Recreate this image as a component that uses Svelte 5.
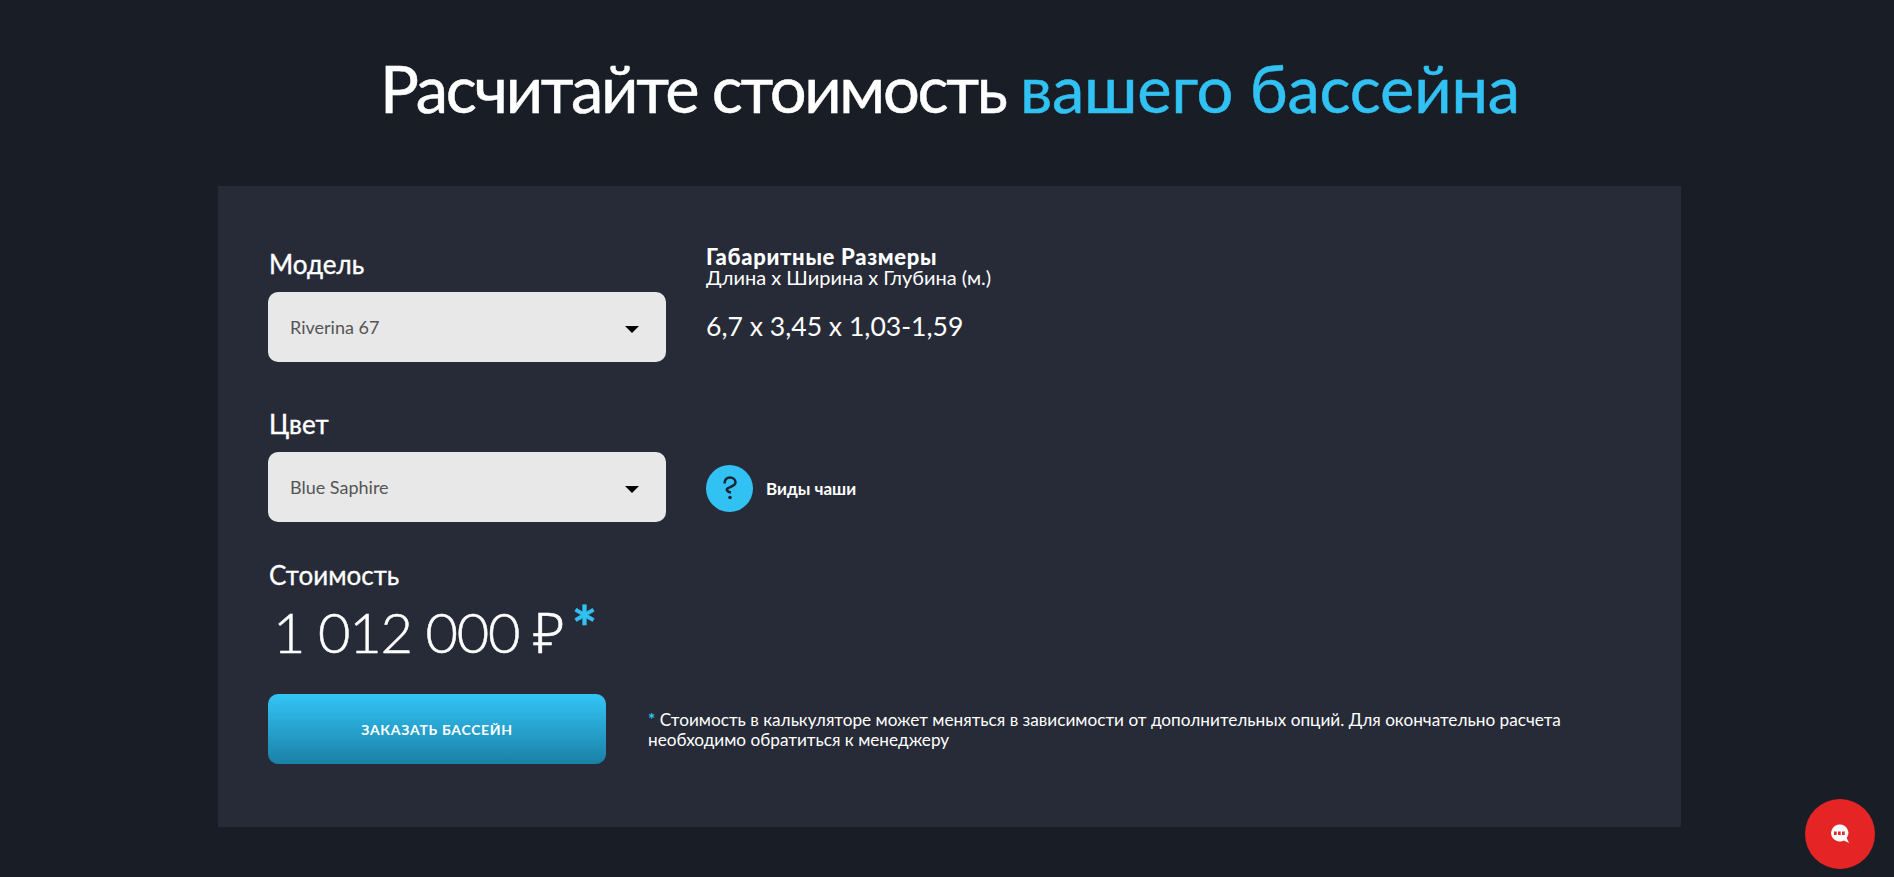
<script lang="ts">
	const price = '1 012 000 ₽';
</script>

<main class="page">
	<h1>Расчитайте стоимость <span>вашего бассейна</span></h1>

	<section class="panel">
		<div class="row first">
			<div class="field">
				<div class="label">Модель</div>
				<div class="select">
					<span>Riverina 67</span>
					<i class="caret"></i>
				</div>
			</div>
			<div class="dims">
				<div class="dims-title">Габаритные Размеры</div>
				<div class="dims-sub">Длина х Ширина х Глубина (м.)</div>
				<div class="dims-value">6,7 х 3,45 х 1,03-1,59</div>
			</div>
		</div>

		<div class="row second">
			<div class="field">
				<div class="label">Цвет</div>
				<div class="select">
					<span>Blue Saphire</span>
					<i class="caret"></i>
				</div>
			</div>
			<div class="hint">
				<span class="hint-icon">
					<svg width="16" height="24" viewBox="0 0 16 24" fill="none" stroke="#1b2430" stroke-width="2.500">
						<path d="M2.500 7.500C2.500 3.500 5 1.500 8 1.500s5.500 2 5.500 5c0 3.500-5.500 4-8 6-1.500 1.500 0 3.500 3.500 4" />
						<circle cx="8" cy="21.500" r="1.800" fill="#1b2430" stroke="none" />
					</svg>
				</span>
				<span class="hint-text">Виды чаши</span>
			</div>
		</div>

		<div class="cost-label">Стоимость</div>
		<div class="price">{price}<span class="star">*</span></div>

		<div class="row order">
			<button class="order-btn">ЗАКАЗАТЬ БАССЕЙН</button>
			<p class="note">
				<span class="note-star">*</span>&nbsp;Стоимость в калькуляторе может меняться в зависимости от дополнительных опций. Для окончательно расчета необходимо обратиться к менеджеру
			</p>
		</div>
	</section>

	<button class="chat" aria-label="Чат">
		<svg width="20" height="20" viewBox="0 0 20 20">
			<path d="M9.500 0.500a8.500 8.500 0 1 0 4.300 15.900l5.200 2.600-2.300-5A8.500 8.500 0 0 0 9.500 0.500z" fill="#fff" />
			<rect x="4" y="7.500" width="2.700" height="3.500" fill="#e52525" />
			<rect x="8" y="7.500" width="2.700" height="3.500" fill="#e52525" />
			<rect x="12" y="7.500" width="2.700" height="3.500" fill="#e52525" />
		</svg>
	</button>
</main>

<style>
	:global(body) {
		margin: 0;
		background: #191e26;
	}

	.page {
		height: 877px;
		overflow: hidden;
		font-family: 'Lato', 'Noto Sans', sans-serif;
		color: #fff;
		box-sizing: border-box;
		padding-top: 47px;
	}

	h1 {
		margin: 0;
		height: 139px;
		padding-left: 6px;
		text-align: center;
		font-size: 65px;
		line-height: 82px;
		font-weight: 400;
		letter-spacing: -2.300px;
		-webkit-text-stroke: 0.5px currentColor;
	}

	h1 span {
		color: #31c1f2;
		letter-spacing: -0.200px;
	}

	.panel {
		width: 1463px;
		height: 641px;
		margin-left: 218px;
		box-sizing: border-box;
		padding: 62px 50px 0;
		background: #272b37;
	}

	.row {
		display: flex;
	}

	.field {
		width: 398px;
	}

	.label {
		font-size: 26px;
		line-height: 32px;
		margin-bottom: 12px;
		padding-left: 1px;
		-webkit-text-stroke: 0.4px currentColor;
	}

	.select {
		height: 70px;
		display: flex;
		align-items: center;
		justify-content: space-between;
		padding: 0 27px 0 22px;
		box-sizing: border-box;
		background: #e8e8e8;
		border-radius: 10px;
		color: #555;
		font-size: 18px;
	}

	.caret {
		width: 0;
		height: 0;
		margin-top: 4px;
		border-left: 7px solid transparent;
		border-right: 7px solid transparent;
		border-top: 7px solid #000;
	}

	.dims {
		margin-left: 40px;
		margin-top: -1px;
	}

	.dims-title {
		font-size: 22px;
		line-height: 20px;
		font-weight: 900;
		letter-spacing: 0.700px;
	}

	.dims-sub {
		font-size: 20px;
		line-height: 20px;
	}

	.dims-value {
		margin-top: 23px;
		font-size: 26.600px;
		line-height: 32px;
	}

	.second {
		margin-top: 46px;
	}

	.hint {
		display: flex;
		align-items: center;
		margin-left: 40px;
		align-self: flex-end;
		height: 68px;
	}

	.hint-icon {
		width: 47px;
		height: 47px;
		border-radius: 50%;
		background: #31c1f2;
		display: flex;
		align-items: center;
		justify-content: center;
	}

	.hint-text {
		margin-left: 13px;
		font-size: 17px;
		font-weight: 700;
	}

	.cost-label {
		margin-top: 37px;
		padding-left: 1px;
		font-size: 26px;
		line-height: 32px;
		-webkit-text-stroke: 0.300px currentColor;
	}

	.price {
		margin-top: 5px;
		padding-left: 5px;
		font-size: 56px;
		line-height: 72px;
		font-weight: 300;
		letter-spacing: -1.300px;
		-webkit-text-stroke: 0.500px currentColor;
	}

	.star {
		color: #31c1f2;
		font-weight: 700;
		margin-left: 8px;
		font-size: 60px;
		line-height: 0;
		vertical-align: 3px;
	}

	.order {
		margin-top: 26px;
		align-items: center;
	}

	.order-btn {
		width: 338px;
		height: 70px;
		border: 0;
		border-radius: 10px;
		background: linear-gradient(180deg, #33c5f6 0%, #1a80a6 100%);
		color: #fff;
		font-family: inherit;
		font-size: 14px;
		font-weight: 700;
		letter-spacing: 0.700px;
	}

	.note {
		margin: 0 0 0 42px;
		width: 960px;
		font-size: 17.200px;
		line-height: 20px;
		padding-top: 1px;
	}

	.note-star {
		color: #31c1f2;
		font-weight: 700;
	}

	.chat {
		position: fixed;
		right: 19px;
		bottom: 8px;
		width: 70px;
		height: 70px;
		border: 0;
		padding: 0;
		border-radius: 50%;
		background: #e52525;
		display: flex;
		align-items: center;
		justify-content: center;
	}
</style>
